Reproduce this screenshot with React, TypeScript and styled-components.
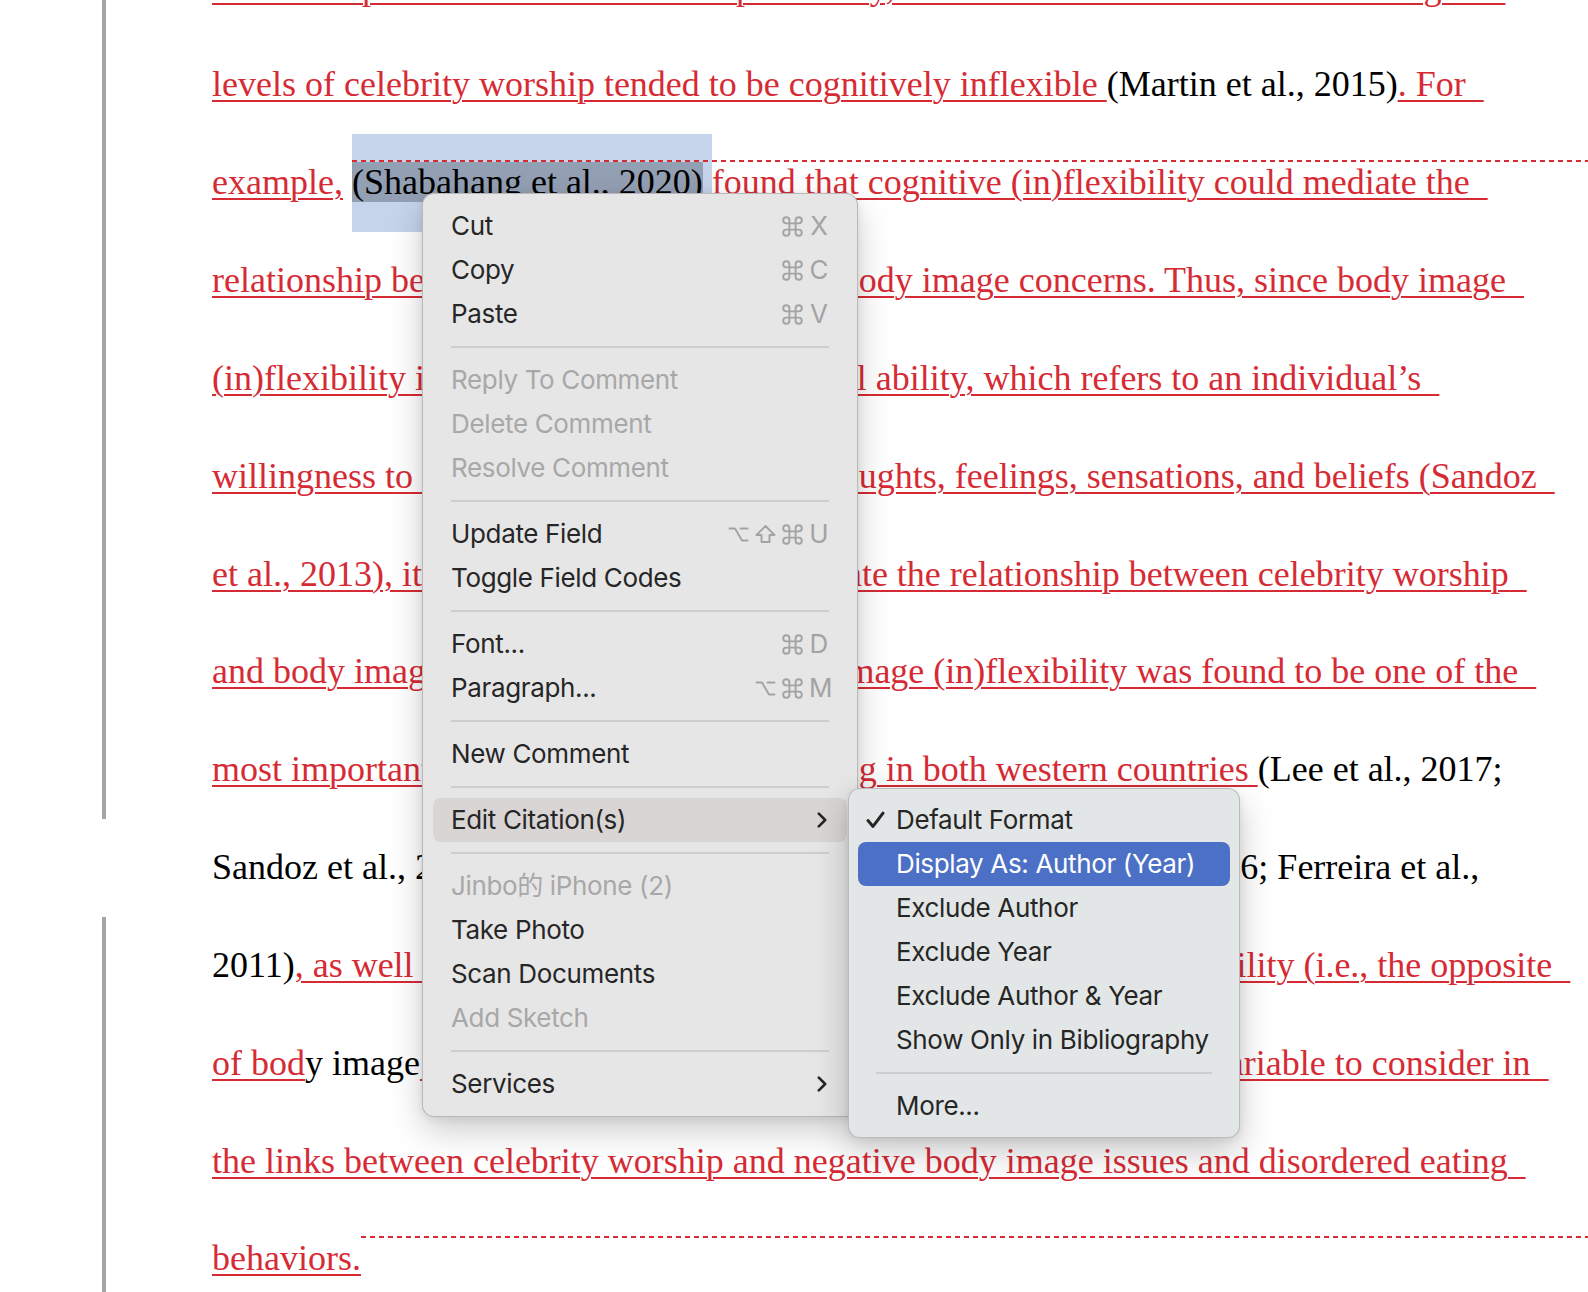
import React from "react";
import styled, { createGlobalStyle } from "styled-components";

const LINE_H = 97.83;
const RED = "#d62b35";
const KEY_GRAY = "#a3a3a3";

const GlobalStyle = createGlobalStyle`
  html, body { margin: 0; padding: 0; background: #ffffff; overflow: hidden; }
  #root { width: 1588px; height: 1292px; }
`;

const Screen = styled.div`
  position: relative;
  width: 1588px;
  height: 1292px;
  overflow: hidden;
  background: #ffffff;
`;

/* ---------- document ---------- */

const DocumentBody = styled.div`
  margin-top: -61.43px;
  font-family: "Liberation Serif", "Times New Roman", serif;
  font-size: 36px;
  color: #000000;
`;

const Line = styled.div`
  display: grid;
  grid-template-columns: 102px 4px 106px 1fr;
  height: ${LINE_H}px;
`;

const ChangeBar = styled.span<{ $on: boolean }>`
  background: ${(p) => (p.$on ? "#a6a6a6" : "transparent")};
`;

const Gutter = styled.span``;

const LineText = styled.p`
  grid-column: 4;
  margin: 0;
  line-height: ${LINE_H}px;
  white-space: pre;
`;

const Ins = styled.span`
  color: ${RED};
  text-decoration: underline;
  text-decoration-color: ${RED};
  text-decoration-thickness: 2px;
  text-underline-offset: 4px;
`;

const Plain = styled.span`
  color: #000000;
`;

const Selection = styled.span`
  display: inline-block;
  height: ${LINE_H}px;
  line-height: ${LINE_H}px;
  vertical-align: baseline;
  background: #c5d3eb;
`;

const FieldShade = styled.span`
  position: relative;
  background: #939fb3;
  color: #000000;
`;

const CommentAnchor = styled.span`
  position: relative;
  display: inline-block;
  width: 1px;
  height: 1em;
  vertical-align: -0.2em;
`;

const AnchorLine = styled.span<{ $top?: number }>`
  position: absolute;
  left: 0;
  top: ${(p) => p.$top ?? -2}px;
  width: 1400px;
  height: 2px;
  background: repeating-linear-gradient(
    to right,
    ${RED} 0 5px,
    transparent 5px 9px
  );
`;

const DocLine: React.FC<{ changed?: boolean; children: React.ReactNode }> = ({
  changed = true,
  children,
}) => (
  <Line>
    <Gutter />
    <ChangeBar $on={changed} />
    <Gutter />
    <LineText>{children}</LineText>
  </Line>
);

/* ---------- menus ---------- */

const Menu = styled.div`
  position: absolute;
  left: 422px;
  top: 193px;
  z-index: 10;
  width: 436px;
  box-sizing: border-box;
  padding: 10px;
  background: #e6e6e6;
  border: 1px solid rgba(0, 0, 0, 0.2);
  border-radius: 12px;
  box-shadow: 0 14px 34px rgba(0, 0, 0, 0.2), 0 2px 8px rgba(0, 0, 0, 0.08);
  font-family: Inter, "Noto Sans CJK SC", "DejaVu Sans", sans-serif;
  font-size: 26px;
  letter-spacing: -0.35px;
`;

const SubMenu = styled.div`
  position: absolute;
  top: -10px;
  left: calc(100% + 1px);
  z-index: 11;
  width: 392px;
  box-sizing: border-box;
  padding: 9px;
  background: #e3e6e6;
  border: 1px solid rgba(0, 0, 0, 0.18);
  border-radius: 12px;
  box-shadow: 0 14px 34px rgba(0, 0, 0, 0.22), 0 2px 8px rgba(0, 0, 0, 0.08);
`;

const Item = styled.div<{ $disabled?: boolean; $active?: boolean; $tone?: "gray" | "blue" }>`
  position: relative;
  display: flex;
  align-items: center;
  height: 44px;
  padding: 0 18px;
  border-radius: 8px;
  line-height: 44px;
  white-space: nowrap;
  color: ${(p) =>
    p.$active && p.$tone === "blue" ? "#ffffff" : p.$disabled ? "#a8a8a8" : "#262626"};
  background: ${(p) =>
    p.$active ? (p.$tone === "blue" ? "#4c70c6" : "#d9d5d5") : "transparent"};
`;

const SubItem = styled(Item)`
  padding: 0 18px 0 8px;
`;

const CheckCol = styled.span`
  display: flex;
  align-items: center;
  width: 30px;
  height: 44px;
  flex: none;
`;

const Separator = styled.div`
  height: 2px;
  margin: 10px 18px;
  background: #cdcdcd;
`;

const Shortcut = styled.span`
  margin-left: auto;
  display: flex;
  align-items: center;
  gap: 6px;
  color: ${KEY_GRAY};
  letter-spacing: 0;
`;

const ModKey = styled.svg`
  display: block;
  flex: none;
`;

const KeyChar = styled.span`
  width: 20px;
  text-align: center;
`;

type Mod = "cmd" | "opt" | "shift";

const MOD_PATHS: Record<Mod, string> = {
  cmd: "M7.4 7.4 V4.3 A3.1 3.1 0 1 0 4.3 7.4 H16.7 A3.1 3.1 0 1 0 13.6 4.3 V16.7 A3.1 3.1 0 1 0 16.7 13.6 H4.3 A3.1 3.1 0 1 0 7.4 16.7 Z",
  opt: "M1.5 4.5 H7 L14 16.5 H19.5 M12.5 4.5 H19.5",
  shift: "M10.5 2 L19.5 11 H14.5 V18 H6.5 V11 H1.5 Z",
};

const ModIcon: React.FC<{ kind: Mod }> = ({ kind }) => (
  <ModKey width="21" height="21" viewBox="0 0 21 21">
    <path
      d={MOD_PATHS[kind]}
      fill="none"
      stroke={KEY_GRAY}
      strokeWidth="1.9"
      strokeLinejoin="round"
      strokeLinecap="round"
    />
  </ModKey>
);

const Chevron = styled.svg`
  margin-left: auto;
  margin-right: 2px;
  flex: none;
`;

const ChevronIcon = () => (
  <Chevron width="10" height="16" viewBox="0 0 10 16">
    <path
      d="M1.8 1.6 L8.2 8 L1.8 14.4"
      fill="none"
      stroke="#262626"
      strokeWidth="2.6"
      strokeLinecap="round"
      strokeLinejoin="round"
    />
  </Chevron>
);

const CheckIcon = () => (
  <svg width="19" height="18" viewBox="0 0 19 18">
    <path
      d="M2 9.6 L7 15.4 L17 2.2"
      fill="none"
      stroke="#262626"
      strokeWidth="3"
      strokeLinecap="round"
      strokeLinejoin="round"
    />
  </svg>
);

type RowProps = {
  label: string;
  mods?: Mod[];
  keyChar?: string;
  disabled?: boolean;
};

const MenuRow: React.FC<RowProps> = ({ label, mods, keyChar, disabled }) => (
  <Item $disabled={disabled}>
    <span>{label}</span>
    {keyChar && (
      <Shortcut>
        {mods?.map((m, i) => (
          <ModIcon key={i} kind={m} />
        ))}
        <KeyChar>{keyChar}</KeyChar>
      </Shortcut>
    )}
  </Item>
);

const CitationMenu = () => (
  <SubMenu>
    <SubItem>
      <CheckCol>
        <CheckIcon />
      </CheckCol>
      <span>Default Format</span>
    </SubItem>
    <SubItem $active $tone="blue">
      <CheckCol />
      <span>Display As: Author (Year)</span>
    </SubItem>
    <SubItem>
      <CheckCol />
      <span>Exclude Author</span>
    </SubItem>
    <SubItem>
      <CheckCol />
      <span>Exclude Year</span>
    </SubItem>
    <SubItem>
      <CheckCol />
      <span>Exclude Author &amp; Year</span>
    </SubItem>
    <SubItem>
      <CheckCol />
      <span>Show Only in Bibliography</span>
    </SubItem>
    <Separator />
    <SubItem>
      <CheckCol />
      <span>More...</span>
    </SubItem>
  </SubMenu>
);

const ContextMenu = () => (
  <Menu>
    <MenuRow label="Cut" mods={["cmd"]} keyChar="X" />
    <MenuRow label="Copy" mods={["cmd"]} keyChar="C" />
    <MenuRow label="Paste" mods={["cmd"]} keyChar="V" />
    <Separator />
    <MenuRow label="Reply To Comment" disabled />
    <MenuRow label="Delete Comment" disabled />
    <MenuRow label="Resolve Comment" disabled />
    <Separator />
    <MenuRow label="Update Field" mods={["opt", "shift", "cmd"]} keyChar="U" />
    <MenuRow label="Toggle Field Codes" />
    <Separator />
    <MenuRow label="Font..." mods={["cmd"]} keyChar="D" />
    <MenuRow label="Paragraph..." mods={["opt", "cmd"]} keyChar="M" />
    <Separator />
    <MenuRow label="New Comment" />
    <Separator />
    <Item $active $tone="gray">
      <span>Edit Citation(s)</span>
      <ChevronIcon />
      <CitationMenu />
    </Item>
    <Separator />
    <MenuRow label="Jinbo的 iPhone (2)" disabled />
    <MenuRow label="Take Photo" />
    <MenuRow label="Scan Documents" />
    <MenuRow label="Add Sketch" disabled />
    <Separator />
    <Item>
      <span>Services</span>
      <ChevronIcon />
    </Item>
  </Menu>
);

/* ---------- app ---------- */

export default function App() {
  return (
    <Screen>
      <GlobalStyle />
      <DocumentBody>
        <DocLine>
          <Ins>take an important role in the links. Specifically, it was found that individuals with higher  </Ins>
        </DocLine>
        <DocLine>
          <Ins>levels of celebrity worship tended to be cognitively inflexible </Ins>
          <Plain>(Martin et al., 2015)</Plain>
          <Ins>. For  </Ins>
        </DocLine>
        <DocLine>
          <Ins>example,</Ins>
          <Plain> </Plain>
          <Selection>
            <FieldShade>
              <AnchorLine />
              (Shabahang et al., 2020)
            </FieldShade>{" "}
          </Selection>
          <Ins>found that cognitive (in)flexibility could mediate the  </Ins>
        </DocLine>
        <DocLine>
          <Ins>relationship between celebrity worship and body image concerns. Thus, since body image  </Ins>
        </DocLine>
        <DocLine>
          <Ins>(in)flexibility is conceived as a psychological ability, which refers to an individual’s  </Ins>
        </DocLine>
        <DocLine>
          <Ins>willingness to fully experience unwanted thoughts, feelings, sensations, and beliefs (Sandoz  </Ins>
        </DocLine>
        <DocLine>
          <Ins>et al., 2013), it is possible that it may moderate the relationship between celebrity worship  </Ins>
        </DocLine>
        <DocLine>
          <Ins>and body image concerns. Moreover, body image (in)flexibility was found to be one of the  </Ins>
        </DocLine>
        <DocLine>
          <Ins>most important correlates of disordered eating in both western countries </Ins>
          <Plain>(Lee et al., 2017;</Plain>
        </DocLine>
        <DocLine changed={false}>
          <Plain>Sandoz et al., 2013; Webb, 2015; Timko et al., 2021; Hughes et al., 2016; Ferreira et al.,</Plain>
        </DocLine>
        <DocLine>
          <Plain>2011)</Plain>
          <Ins>, as well as the significant predictive roles of body image inflexibility (i.e., the opposite  </Ins>
        </DocLine>
        <DocLine>
          <Ins>of bod</Ins>
          <Plain>y image</Plain>
          <Ins> flexibility), which therefore may also be an important variable to consider in  </Ins>
        </DocLine>
        <DocLine>
          <Ins>the links between celebrity worship and negative body image issues and disordered eating  </Ins>
        </DocLine>
        <DocLine>
          <Ins>behaviors.</Ins>
          <CommentAnchor>
            <AnchorLine $top={-6} />
          </CommentAnchor>
        </DocLine>
      </DocumentBody>
      <ContextMenu />
    </Screen>
  );
}
